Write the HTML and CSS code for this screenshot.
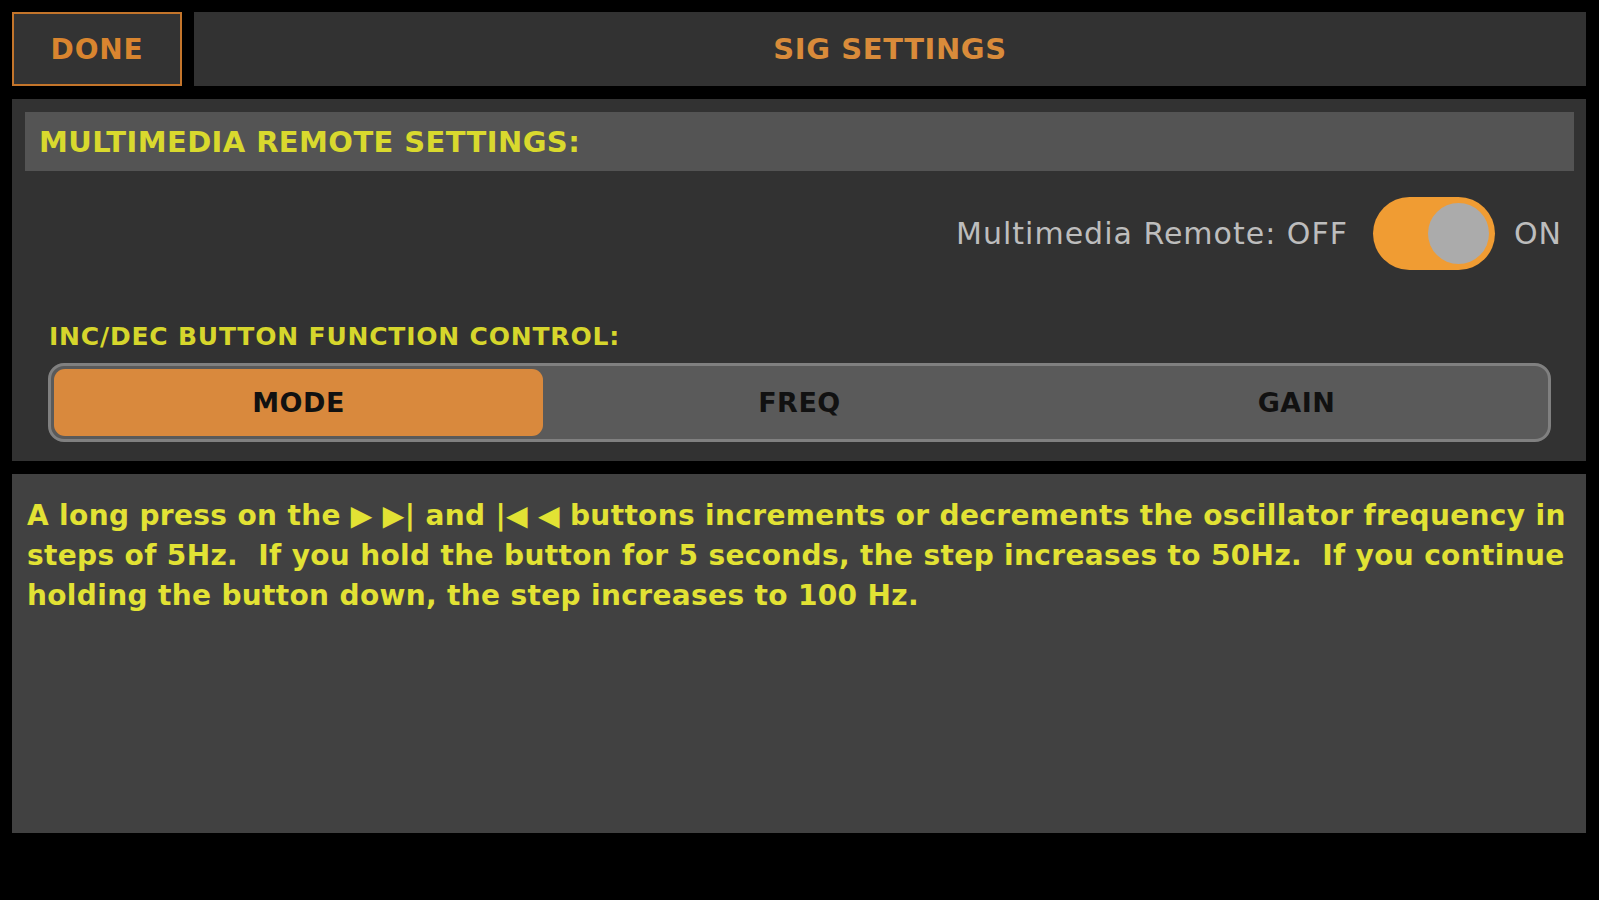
FILE: index.html
```html
<!DOCTYPE html>
<html lang="en">
<head>
  <title>SIG Settings</title>
  <meta charset="utf-8">
  <meta name="viewport" content="width=device-width, initial-scale=1">
  <link rel="stylesheet" href="styles.css">
</head>
<body>
  <div class="screen">
    <header class="topbar">
      <button class="topbar__done" type="button">DONE</button>
      <h1 class="topbar__title">SIG SETTINGS</h1>
    </header>

    <section class="panel">
      <h2 class="panel__header">MULTIMEDIA REMOTE SETTINGS:</h2>

      <div class="remote-row">
        <span class="remote-row__label">Multimedia Remote: OFF</span>
        <span class="switch switch--on" role="switch" aria-checked="true">
          <span class="switch__knob"></span>
        </span>
        <span class="remote-row__label">ON</span>
      </div>

      <h3 class="panel__label">INC/DEC BUTTON FUNCTION CONTROL:</h3>
      <div class="segmented" role="tablist">
        <button class="segmented__item segmented__item--active" type="button">MODE</button>
        <button class="segmented__item" type="button">FREQ</button>
        <button class="segmented__item" type="button">GAIN</button>
      </div>
    </section>

    <section class="info">
      <p class="info__text">A long press on the &#9654; &#9654;| and |&#9664; &#9664; buttons increments or decrements the oscillator frequency in steps of 5Hz.&nbsp; If you hold the button for 5 seconds, the step increases to 50Hz.&nbsp; If you continue holding the button down, the step increases to 100 Hz.</p>
    </section>
  </div>
</body>
</html>
```

FILE: styles.css
```css
*, *::before, *::after {
  margin: 0;
  padding: 0;
  box-sizing: border-box;
}

html {
  font-family: "DejaVu Sans", "Open Sans", sans-serif;
  font-weight: 700;
}

body {
  min-height: 100vh;
  background-color: #000000;
}

.screen {
  padding: 12px 13px 0 12px;
}

.topbar {
  display: flex;
  gap: 12px;
  height: 74px;
}

.topbar__done {
  width: 170px;
  border: 2px solid #C4752B;
  background-color: #333333;
  color: #D9852F;
  font-family: inherit;
  font-size: 28px;
  font-weight: 700;
  letter-spacing: 0.8px;
}

.topbar__title {
  flex: 1;
  display: flex;
  align-items: center;
  justify-content: center;
  background-color: #323232;
  color: #D98B3A;
  font-size: 29px;
  font-weight: 700;
  letter-spacing: 0.6px;
}

.panel {
  margin-top: 13px;
  padding: 13px 12px 19px 13px;
  background-color: #323232;
}

.panel__header {
  display: flex;
  align-items: center;
  height: 59px;
  padding-left: 14px;
  background-color: #545454;
  color: #D9D92E;
  font-size: 29px;
  font-weight: 700;
  letter-spacing: 0.4px;
}

.remote-row {
  display: flex;
  align-items: center;
  justify-content: flex-end;
  gap: 19px;
  margin-top: 26px;
  padding-right: 12px;
}

.remote-row__label {
  color: #BDBDBD;
  font-size: 30px;
  font-weight: 400;
  letter-spacing: 1px;
}

.remote-row__label:first-child {
  margin-right: 6px;
}

.switch {
  display: flex;
  align-items: center;
  justify-content: flex-end;
  width: 122px;
  height: 73px;
  padding: 6px;
  border-radius: 37px;
  background-color: #F09C33;
}

.switch__knob {
  width: 61px;
  height: 61px;
  border-radius: 50%;
  background-color: #ABABAB;
}

.panel__label {
  margin-top: 52px;
  padding-left: 24px;
  color: #D6D62C;
  font-size: 25px;
  font-weight: 700;
  letter-spacing: 0.8px;
}

.segmented {
  display: grid;
  grid-template-columns: repeat(3, 1fr);
  height: 79px;
  margin: 12px 23px 0 23px;
  padding: 3px;
  border: 3px solid #808080;
  border-radius: 16px;
  background-color: #5A5A5A;
}

.segmented__item {
  border: none;
  border-radius: 11px;
  background: transparent;
  color: #111111;
  font-family: inherit;
  font-size: 27px;
  font-weight: 700;
  letter-spacing: 0.5px;
}

.segmented__item--active {
  margin-right: 8px;
  background-color: #D9893D;
}

.info {
  height: 359px;
  margin-top: 13px;
  padding: 22px 15px;
  background-color: #414141;
}

.info__text {
  color: #E2E234;
  font-size: 28px;
  line-height: 40px;
  letter-spacing: 0.35px;
}
```
